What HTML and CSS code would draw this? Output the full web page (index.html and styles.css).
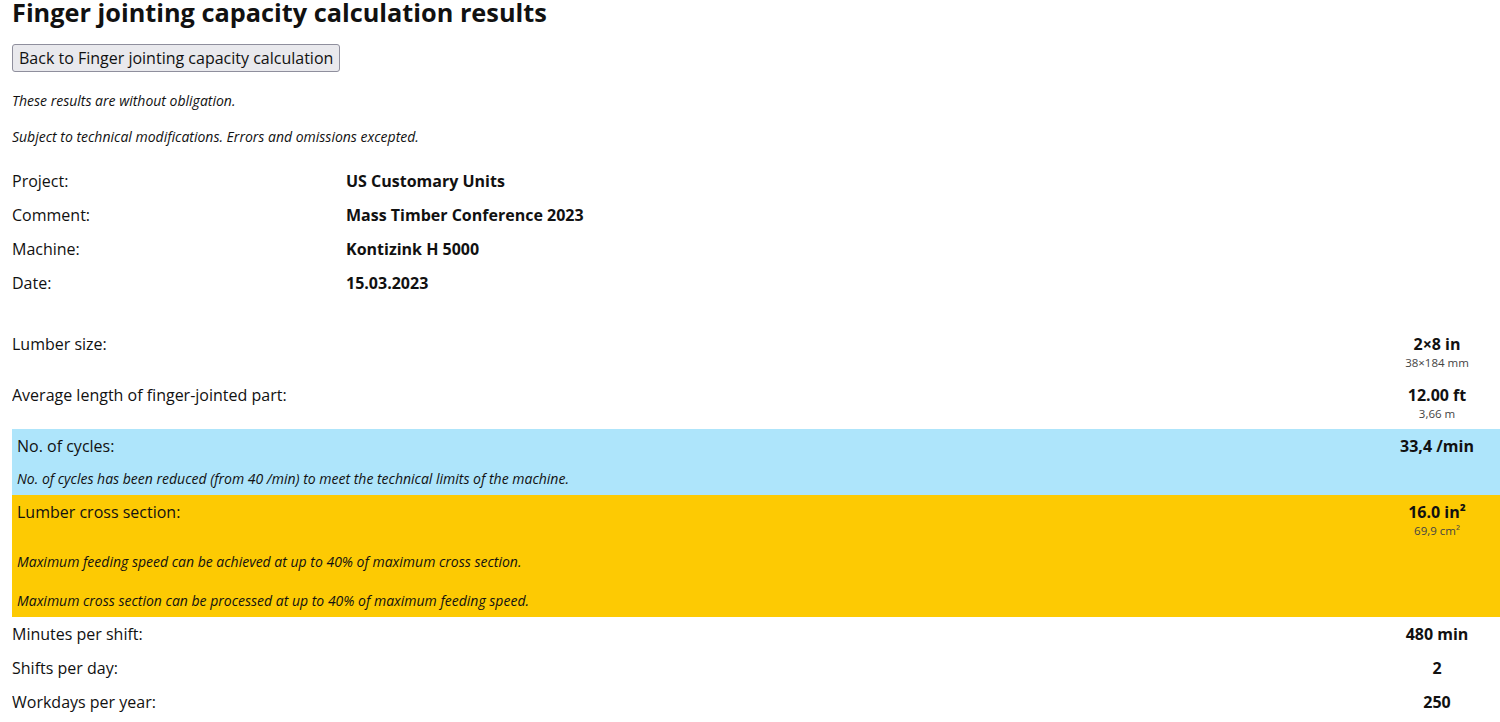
FILE: index.html
```html
<!DOCTYPE html>
<html lang="en">
<head>
  <meta charset="UTF-8" />
  <meta name="viewport" content="width=device-width, initial-scale=1.0" />
  <title>Finger jointing capacity calculation results</title>
  <link rel="stylesheet" href="styles.css">
</head>
<body>
  <h1>Finger jointing capacity calculation results</h1>

  <button class="back">Back to Finger jointing capacity calculation</button>

  <p class="note">These results are without obligation.</p>
  <p class="note">Subject to technical modifications. Errors and omissions excepted.</p>

  <div class="info">
    <div class="info-row"><span class="label">Project:</span><b>US Customary Units</b></div>
    <div class="info-row"><span class="label">Comment:</span><b>Mass Timber Conference 2023</b></div>
    <div class="info-row"><span class="label">Machine:</span><b>Kontizink H 5000</b></div>
    <div class="info-row"><span class="label">Date:</span><b>15.03.2023</b></div>
  </div>

  <div class="results">
    <div class="row">
      <div class="name">Lumber size:</div>
      <div class="value">2×8 in<small>38×184 mm</small></div>
    </div>
    <div class="row">
      <div class="name">Average length of finger-jointed part:</div>
      <div class="value">12.00 ft<small>3,66 m</small></div>
    </div>

    <div class="box blue">
      <div class="row">
        <div class="name">No. of cycles:</div>
        <div class="value">33,4 /min</div>
      </div>
      <div class="hint">No. of cycles has been reduced (from 40 /min) to meet the technical limits of the machine.</div>
    </div>

    <div class="box yellow">
      <div class="row">
        <div class="name">Lumber cross section:</div>
        <div class="value">16.0 in²<small>69,9 cm²</small></div>
      </div>
      <div class="hint">Maximum feeding speed can be achieved at up to 40% of maximum cross section.</div>
      <div class="hint">Maximum cross section can be processed at up to 40% of maximum feeding speed.</div>
    </div>

    <div class="row">
      <div class="name">Minutes per shift:</div>
      <div class="value">480 min</div>
    </div>
    <div class="row">
      <div class="name">Shifts per day:</div>
      <div class="value">2</div>
    </div>
    <div class="row">
      <div class="name">Workdays per year:</div>
      <div class="value">250</div>
    </div>
  </div>
</body>
</html>
```

FILE: styles.css
```css
body {
  font-family: 'Open Sans', 'Noto Sans', sans-serif;
  font-size: 16px;
  line-height: 20px;
  color: #111;
  background-color: #fff;
  margin: 0 0 0 12px;
}
h1 {
  font-size: 25.3px;
  line-height: 24px;
  margin: 0 0 20px 0;
}
.back {
  font-family: inherit;
  font-size: 16px;
  line-height: 20px;
  color: #111;
  background-color: #e9e9ed;
  border: 1px solid #8f8f9d;
  border-radius: 3px;
  padding: 3px 6px;
  margin: 0 0 20px 0;
}
.note {
  font-size: 14px;
  line-height: 18px;
  font-style: italic;
  margin: 0 0 18px 0;
}
.info-row {
  display: flex;
  padding: 7px 0;
}
.info-row .label {
  width: 334px;
}
.results {
  margin-top: 27px;
}
.row {
  display: flex;
  align-items: flex-start;
  padding: 7px 0;
}
.name {
  flex: 1;
}
.value {
  width: 126px;
  text-align: center;
  font-weight: bold;
}
.value small {
  display: block;
  font-size: 11.5px;
  line-height: 17px;
  font-weight: normal;
  color: #444;
}
.box .name {
  padding-left: 5px;
}
.hint {
  font-size: 14px;
  line-height: 18px;
  font-style: italic;
  padding: 7px 5px;
}
.hint + .hint {
  margin-top: 7px;
}
.blue { background-color: #aee5fb; }
.yellow { background-color: #fdca03; }
```
